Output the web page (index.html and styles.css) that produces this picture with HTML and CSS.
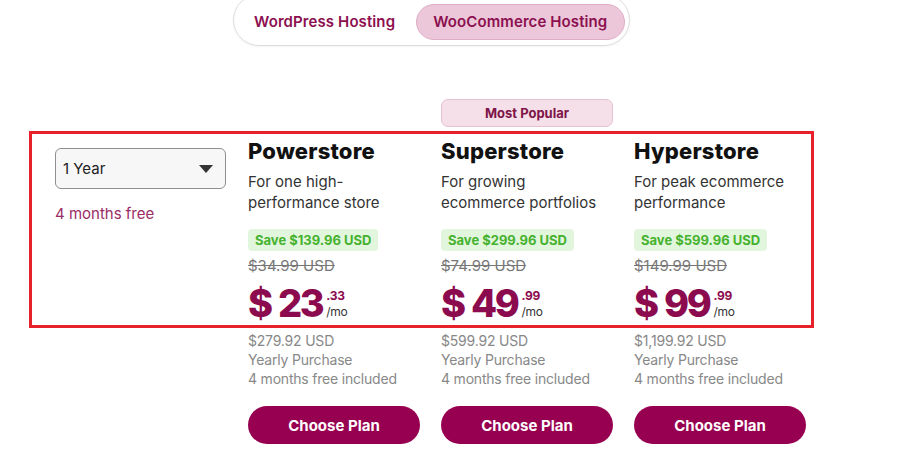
FILE: index.html
```html
<!DOCTYPE html>
<html lang="en">
<head>
<meta charset="utf-8">
<title>WooCommerce Hosting Plans</title>
<link rel="stylesheet" href="styles.css">
</head>
<body>
<div class="page">
  <div class="highlight"></div>
  <div class="toggle-row">
    <div class="toggle">
      <span class="tab">WordPress Hosting</span>
      <span class="tab active">WooCommerce Hosting</span>
    </div>
  </div>

  <div class="pricing">
    <div class="badge-row">
      <div></div>
      <div></div>
      <div class="popular">Most Popular</div>
      <div></div>
    </div>
    <div class="plans">
      <div class="term">
        <div class="select">
          <span>1 Year</span>
          <svg class="caret" width="14" height="8" viewBox="0 0 14 8"><path d="M0 0 H14 L7 8 Z" fill="#333"/></svg>
        </div>
        <div class="free">4 months free</div>
      </div>

      <div class="plan">
        <h2 class="name">Powerstore</h2>
        <p class="desc">For one high-<br>performance store</p>
        <span class="save">Save $139.96 USD</span>
        <div class="old">$34.99 USD</div>
        <div class="price"><span class="cur">$</span><span class="whole">23</span><span class="frac"><span class="cents">.33</span><span class="mo">/mo</span></span></div>
        <div class="meta">$279.92 USD<br>Yearly Purchase<br>4 months free included</div>
        <button class="choose">Choose Plan</button>
      </div>

      <div class="plan">
        <h2 class="name">Superstore</h2>
        <p class="desc">For growing<br>ecommerce portfolios</p>
        <span class="save">Save $299.96 USD</span>
        <div class="old">$74.99 USD</div>
        <div class="price"><span class="cur">$</span><span class="whole">49</span><span class="frac"><span class="cents">.99</span><span class="mo">/mo</span></span></div>
        <div class="meta">$599.92 USD<br>Yearly Purchase<br>4 months free included</div>
        <button class="choose">Choose Plan</button>
      </div>

      <div class="plan">
        <h2 class="name">Hyperstore</h2>
        <p class="desc">For peak ecommerce<br>performance</p>
        <span class="save">Save $599.96 USD</span>
        <div class="old">$149.99 USD</div>
        <div class="price"><span class="cur">$</span><span class="whole">99</span><span class="frac"><span class="cents">.99</span><span class="mo">/mo</span></span></div>
        <div class="meta">$1,199.92 USD<br>Yearly Purchase<br>4 months free included</div>
        <button class="choose">Choose Plan</button>
      </div>
    </div>
  </div>
</div>
</body>
</html>
```

FILE: styles.css
```css
* { box-sizing: border-box; }
html, body { margin: 0; padding: 0; background: #fff; }
body {
  font-family: Inter, "Open Sans", "Liberation Sans", sans-serif;
  color: #222;
  width: 900px;
  height: 452px;
  overflow: hidden;
}
.page { position: relative; display: flow-root; }

.toggle-row {
  display: flex;
  padding-left: 233px;
  margin-top: -6px;
}
.toggle {
  display: flex;
  align-items: center;
  gap: 4px;
  width: 397px;
  height: 52px;
  border: 1px solid #dcdcdc;
  border-radius: 26px;
  padding: 9px 4px 5px 4px;
  box-shadow: 0 1px 2px rgba(0,0,0,0.05);
}
.tab {
  font-size: 15px;
  font-weight: 600;
  color: #8c1050;
  height: 36px;
  line-height: 36px;
  padding: 0 16px;
  border-radius: 18px;
  white-space: nowrap;
  letter-spacing: 0.1px;
}
.tab:first-child { width: 174px; }
.tab.active {
  width: 210px;
  background: #ebc7d9;
  border: 1px solid #dfadc6;
  line-height: 34px;
  text-align: center;
}

.highlight {
  position: absolute;
  left: 29px;
  top: 131px;
  width: 785px;
  height: 197px;
  border: 3px solid #e8202a;
  pointer-events: none;
  z-index: 2;
}

.pricing {
  padding: 53px 0 0 55px;
}
.badge-row, .plans {
  display: grid;
  grid-template-columns: 172px 172px 172px 172px;
  column-gap: 21px;
}
.popular {
  height: 28px;
  line-height: 26px;
  text-align: center;
  background: #f5dfe9;
  border: 1px solid #e7bfd2;
  border-radius: 7px;
  font-size: 13px;
  font-weight: 700;
  color: #7e1448;
}
.plans { margin-top: 11px; }

.term { padding-top: 10px; }
.select {
  display: flex;
  align-items: center;
  justify-content: space-between;
  width: 171px;
  height: 41px;
  padding: 0 12px 0 7px;
  background: #f7f7f7;
  border: 1px solid #8f8f8f;
  border-radius: 6px;
  font-size: 15px;
  color: #222;
}
.caret { display: block; }
.free {
  margin-top: 15px;
  font-size: 15px;
  color: #9a2c66;
}

.plan { display: flex; flex-direction: column; align-items: flex-start; }
.name {
  margin: 0;
  font-size: 22px;
  line-height: 26px;
  font-weight: 800;
  color: #111;
  letter-spacing: 0.2px;
}
.desc {
  margin: 7px 0 0 0;
  font-size: 15px;
  line-height: 21px;
  color: #333;
}
.save {
  margin-top: 16px;
  display: inline-block;
  height: 22px;
  line-height: 22px;
  padding: 0 7px;
  background: #e2f6dd;
  border-radius: 4px;
  font-size: 13px;
  font-weight: 700;
  color: #46b22f;
}
.old {
  margin-top: 5px;
  font-size: 15px;
  line-height: 20px;
  color: #777;
  text-decoration: line-through;
}
.price {
  display: flex;
  align-items: flex-start;
  margin-top: 6px;
  height: 42px;
  color: #8c0b4f;
  font-weight: 800;
}
.cur { font-size: 38px; line-height: 42px; margin-right: 5px; }
.whole { font-size: 38px; line-height: 42px; letter-spacing: -2.5px; }
.frac {
  display: flex;
  flex-direction: column;
  margin-left: 4px;
  padding-top: 8px;
}
.cents { font-size: 12px; line-height: 12px; font-weight: 700; letter-spacing: -0.3px; }
.mo { font-size: 12px; line-height: 14px; font-weight: 400; color: #333; margin-top: 3px; letter-spacing: -0.3px; }
.meta {
  margin-top: 7px;
  font-size: 14px;
  line-height: 19px;
  color: #888;
  letter-spacing: -0.2px;
}
.choose {
  margin-top: 18px;
  width: 172px;
  height: 38px;
  border: none;
  border-radius: 19px;
  background: #970050;
  color: #fff;
  font-family: inherit;
  font-size: 15px;
  font-weight: 700;
  cursor: pointer;
}
```
